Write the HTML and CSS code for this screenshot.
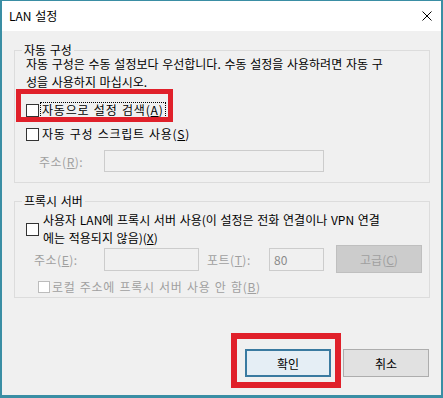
FILE: index.html
```html
<!DOCTYPE html>
<html>

<head>
  <title>LAN 설정</title>
  <link rel="stylesheet" href="styles.css">
</head>

<body>
  <div class="window">
    <div class="titlebar">
      <span class="title">LAN 설정</span>
      <svg class="close" width="10" height="10" viewBox="0 0 10 10">
        <path d="M0.5 0.5 L9.5 9.5 M9.5 0.5 L0.5 9.5" stroke="#000" stroke-width="1" fill="none" />
      </svg>
    </div>

    <div class="content">
      <fieldset class="group group-auto">
        <legend>자동 구성</legend>
        <p class="desc">자동 구성은 수동 설정보다 우선합니다. 수동 설정을 사용하려면 자동 구<br>성을 사용하지 마십시오.</p>
        <div class="check-row row-detect">
          <span class="box"></span>
          <span class="focus">자동으로 설정 검색(<u>A</u>)</span>
        </div>
        <div class="check-row row-script">
          <span class="box"></span>
          <span class="label">자동 구성 스크립트 사용(<u>S</u>)</span>
        </div>
        <div class="field-row row-addr1">
          <span class="field-label disabled label-addr1">주소(<u>R</u>):</span>
          <span class="input input-addr1"></span>
        </div>
      </fieldset>

      <fieldset class="group group-proxy">
        <legend>프록시 서버</legend>
        <div class="check-row row-proxy">
          <span class="box"></span>
          <span class="label two-line">사용자 LAN에 프록시 서버 사용(이 설정은 전화 연결이나 VPN 연결<br>에는 적용되지 않음)(<u>X</u>)</span>
        </div>
        <div class="field-row row-addr2">
          <span class="field-label disabled label-addr2">주소(<u>E</u>):</span>
          <span class="input input-addr2"></span>
          <span class="field-label disabled label-port">포트(<u>T</u>):</span>
          <span class="input input-port">80</span>
          <span class="btn btn-disabled">고급(<u>C</u>)</span>
        </div>
        <div class="check-row row-bypass">
          <span class="box box-disabled"></span>
          <span class="label disabled">로컬 주소에 프록시 서버 사용 안 함(<u>B</u>)</span>
        </div>
      </fieldset>

      <div class="actions">
        <span class="btn btn-default">확인</span>
        <span class="btn">취소</span>
      </div>
    </div>

    <!-- 강조 표시 -->
    <div class="mark mark-detect"></div>
    <div class="mark mark-ok"></div>
  </div>
</body>

</html>
```

FILE: styles.css
```css
html,
body {
  margin: 0;
  padding: 0;
}

body {
  width: 443px;
  height: 398px;
  background-color: #f0f0f0;
  font-family: "Noto Sans CJK KR", "Noto Sans", sans-serif;
  font-size: 12px;
  word-spacing: 1px;
  color: #000;
}

u {
  text-decoration: underline;
  text-underline-offset: 1px;
}

.window {
  position: relative;
  box-sizing: border-box;
  width: 443px;
  height: 398px;
  border: 2px solid #3a8ea4;
  border-top-width: 1px;
  border-bottom-width: 3px;
  background-color: #f0f0f0;
  display: flex;
  flex-direction: column;
}

.titlebar {
  height: 30px;
  background-color: #fff;
  display: flex;
  align-items: center;
  justify-content: space-between;
  padding: 0 9px 0 7px;
}

.title {
  font-size: 12px;
  line-height: 14px;
}

.content {
  flex: 1;
  display: flex;
  flex-direction: column;
}

.group {
  margin: 0 11px 0 12px;
  padding: 0;
  border: 1px solid #dcdcdc;
  min-width: 0;
}

.group legend {
  margin-left: 7px;
  padding: 0 2px;
  line-height: 14px;
}

.group-auto {
  margin-top: 12px;
  padding-bottom: 10px;
}

.group-proxy {
  margin-top: 11px;
  padding-bottom: 1px;
}

.desc {
  margin: -2px 0 0 11px;
  line-height: 18px;
}

.check-row {
  display: flex;
  align-items: center;
  line-height: 18px;
  margin-left: 11px;
}

.box {
  box-sizing: border-box;
  width: 13px;
  height: 13px;
  border: 1px solid #333;
  background-color: #fff;
  flex-shrink: 0;
}

.box-disabled {
  width: 12px;
  height: 12px;
  border-color: #bcbcbc;
}

.label {
  margin-left: 3px;
  white-space: nowrap;
}

.focus {
  margin-left: 2px;
  padding: 0 1px;
  line-height: 14px;
  letter-spacing: 0.8px;
  outline: 1px dotted #000;
  white-space: nowrap;
}

.row-detect {
  margin-top: 12px;
}

.row-script {
  margin-top: 8px;
}

.row-script .label {
  letter-spacing: 0.7px;
}

.row-proxy {
  margin-top: 3px;
}

.row-proxy .label {
  margin-left: 4px;
}

.row-bypass {
  margin-top: 5px;
  margin-left: 23px;
}

.row-bypass .label {
  margin-left: 2px;
  letter-spacing: 0.7px;
}

.disabled {
  color: #a0a0a0;
}

.field-row {
  display: flex;
  align-items: center;
}

.row-addr1 {
  margin-top: 7px;
}

.row-addr2 {
  margin-top: -2px;
}

.field-label {
  white-space: nowrap;
  letter-spacing: 0.5px;
}

.label-addr1 {
  margin-left: 24px;
  width: 65px;
}

.label-addr2 {
  margin-left: 19px;
  width: 70px;
}

.label-port {
  margin-left: 8px;
  width: 62px;
}

.input {
  box-sizing: border-box;
  height: 23px;
  border: 1px solid #cccccc;
  background-color: #f0f0f0;
  color: #8a8a8a;
  line-height: 21px;
  padding-left: 4px;
}

.input-addr1 {
  width: 220px;
  height: 22px;
}

.input-addr2 {
  width: 95px;
}

.input-port {
  width: 55px;
}

.btn {
  box-sizing: border-box;
  width: 86px;
  height: 28px;
  border: 1px solid #adadad;
  background-color: #e1e1e1;
  display: flex;
  align-items: center;
  justify-content: center;
}

.btn-disabled {
  margin-left: 12px;
  border-color: #bfbfbf;
  background-color: #cccccc;
  color: #a0a0a0;
}

.btn-default {
  border: 2px solid #3a7aa0;
  background-color: #e5eef5;
}

.actions {
  display: flex;
  justify-content: flex-end;
  gap: 12px;
  margin: 51px 12px 0 0;
}

.mark {
  position: absolute;
  box-sizing: border-box;
  border: 5px solid #e0202a;
}

.mark-detect {
  left: 14px;
  top: 88px;
  width: 157px;
  height: 33px;
}

.mark-ok {
  left: 229px;
  top: 332px;
  width: 110px;
  height: 55px;
  border-width: 6px;
}
```
